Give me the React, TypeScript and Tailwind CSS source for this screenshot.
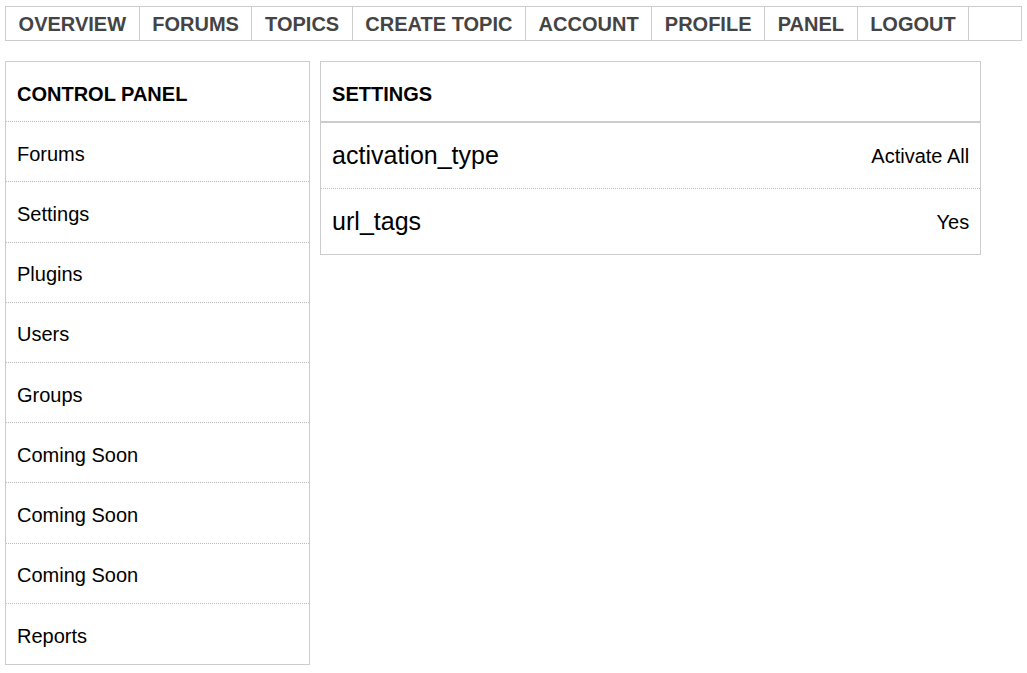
const navItems = ["OVERVIEW", "FORUMS", "TOPICS", "CREATE TOPIC", "ACCOUNT", "PROFILE", "PANEL", "LOGOUT"];

const panelLinks = ["Forums", "Settings", "Plugins", "Users", "Groups", "Coming Soon", "Coming Soon", "Coming Soon", "Reports"];

const settings = [
  { name: "activation_type", value: "Activate All" },
  { name: "url_tags", value: "Yes" },
];

const App = () => {
  return (
    <div className="min-h-screen bg-white px-[5px] pt-[6px] text-black font-['Liberation_Sans',Arial,sans-serif]">
      <ul className="flex border border-[#cccccc]">
        {navItems.map((item) => (
          <li
            key={item}
            className="border-r border-[#cccccc] px-[12.6px] pt-[2px] text-[20px] font-bold leading-[31px] text-[#444444]"
          >
            {item}
          </li>
        ))}
        <li className="flex-1" />
      </ul>

      <div className="mt-[20px] flex items-start gap-[10px]">
        <div className="w-[30%] border border-[#cccccc]">
          <div className="flex h-[60.2px] items-center border-b border-dotted border-[#bbbbbb] px-[11px] pt-[4px] text-[20px] font-bold">
            CONTROL PANEL
          </div>
          {panelLinks.map((link, i) => (
            <div
              key={i}
              className={
                "flex h-[60.2px] items-center px-[11px] pt-[4px] text-[20px] " +
                (i < panelLinks.length - 1 ? "border-b border-dotted border-[#bbbbbb]" : "")
              }
            >
              {link}
            </div>
          ))}
        </div>

        <div className="w-[65%] border border-[#cccccc]">
          <div className="flex h-[61px] items-center border-b-2 border-[#cccccc] px-[11px] pt-[5px] text-[20px] font-bold">
            SETTINGS
          </div>
          {settings.map((s, i) => (
            <div
              key={s.name}
              className={
                "flex items-center justify-between px-[11px] pt-[1px] " +
                (i < settings.length - 1 ? "h-[66px] border-b border-dotted border-[#bbbbbb]" : "h-[65px]")
              }
            >
              <span className="text-[25px]">{s.name}</span>
              <span className="text-[20px]">{s.value}</span>
            </div>
          ))}
        </div>
      </div>
    </div>
  );
};

export default App;
